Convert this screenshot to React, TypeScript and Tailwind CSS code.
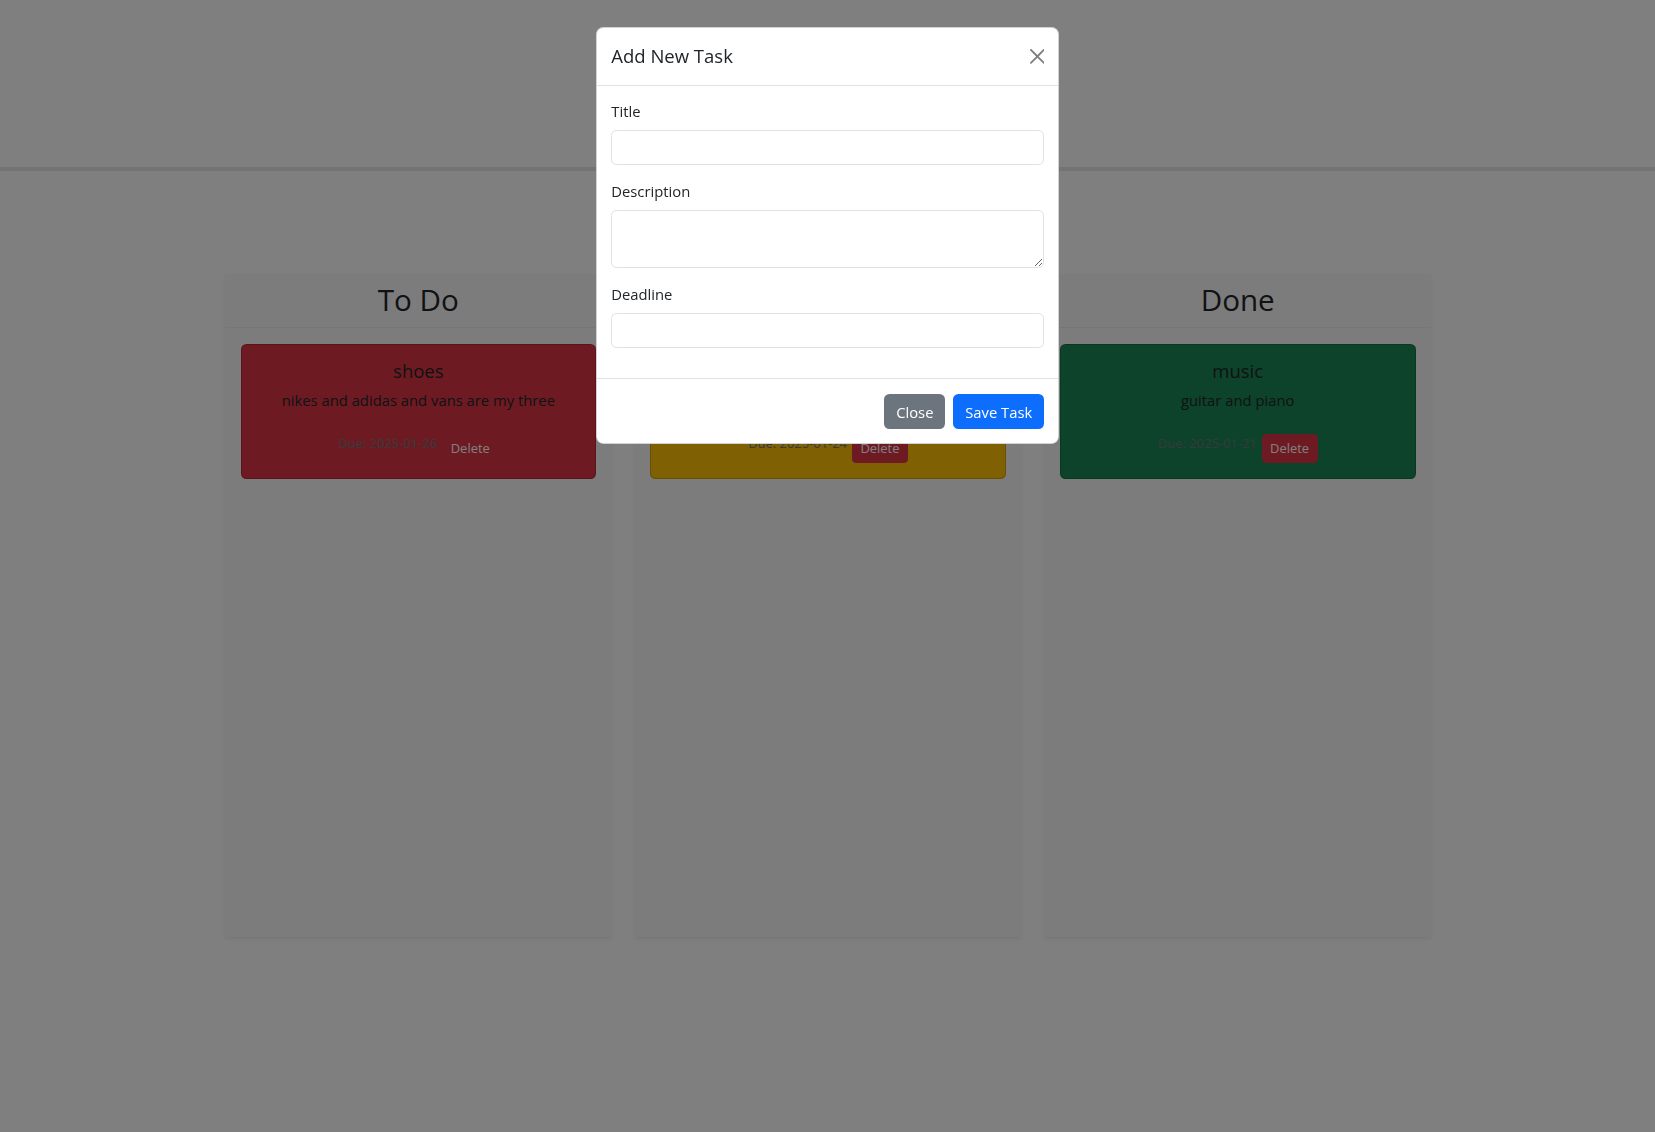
import React from "react";

type Task = {
  title: string;
  desc: string;
  due: string;
  bg: string;
};

const columns: { name: string; tasks: Task[] }[] = [
  {
    name: "To Do",
    tasks: [
      {
        title: "shoes",
        desc: "nikes and adidas and vans are my three",
        due: "2025-01-26",
        bg: "bg-[#dc3545]",
      },
    ],
  },
  {
    name: "In Progress",
    tasks: [
      {
        title: "work",
        desc: "finish the report",
        due: "2025-01-24",
        bg: "bg-[#ffc107]",
      },
    ],
  },
  {
    name: "Done",
    tasks: [
      {
        title: "music",
        desc: "guitar and piano",
        due: "2025-01-21",
        bg: "bg-[#198754]",
      },
    ],
  },
];

function TaskCard({ t }: { t: Task }) {
  return (
    <div
      className={`${t.bg} rounded-[5.5px] border border-black/[.175] p-[14.8px] text-center text-[#212529]`}
    >
      <h5 className="text-[18.5px] leading-[1.2] font-normal mb-[7.4px]">{t.title}</h5>
      <p className="text-[14.8px] leading-[1.5] mb-[22.7px]">{t.desc}</p>
      <div className="flex justify-center items-start gap-[5px]">
        <small className="text-[12.95px] leading-[1.5] text-[#6c757d]">Due: {t.due}</small>
        <button className="h-[28.8px] px-[7.4px] rounded-[3.7px] bg-[#dc3545] border border-[#dc3545] text-white text-[12.95px] leading-[1.5]">
          Delete
        </button>
      </div>
    </div>
  );
}

export default function App() {
  return (
    <div className="relative min-h-screen bg-white font-['Open_Sans','Noto_Sans',sans-serif] text-[#212529]">
      <div className="h-[167px]" />
      <div className="h-[4px] bg-[#e6e6e6]" />
      <div className="mt-[103px] ml-[225px] w-[1206px] flex gap-[23px]">
        {columns.map((c) => (
          <div
            key={c.name}
            className="flex-1 h-[663px] bg-[#f8f9fa] shadow-[0_2px_4px_rgba(0,0,0,0.075)]"
          >
            <div className="h-[54px] pb-[1.5px] flex items-center justify-center border-b border-[#e9ecef]">
              <h2 className="text-[29.6px] leading-[1.2] font-normal">{c.name}</h2>
            </div>
            <div className="px-[15.5px] pt-[16px] flex flex-col gap-[14.8px]">
              {c.tasks.map((t) => (
                <TaskCard key={t.title} t={t} />
              ))}
            </div>
          </div>
        ))}
      </div>

      {/* backdrop */}
      <div className="fixed inset-0 bg-black/50" />

      {/* modal */}
      <div className="fixed inset-0 flex justify-center items-start">
        <div className="mt-[26.7px] w-[462.5px] bg-white rounded-[7.4px] border border-black/[.175]">
          <div className="h-[58px] px-[14px] flex items-center justify-between border-b border-[#dee2e6]">
            <h5 className="text-[18.5px] leading-[1.5] font-normal">Add New Task</h5>
            <svg
              viewBox="0 0 16 16"
              className="w-[14.8px] h-[14.8px] -mr-[0.7px] opacity-50"
              fill="#000"
            >
              <path d="M.293.293a1 1 0 0 1 1.414 0L8 6.586 14.293.293a1 1 0 1 1 1.414 1.414L9.414 8l6.293 6.293a1 1 0 0 1-1.414 1.414L8 9.414l-6.293 6.293a1 1 0 0 1-1.414-1.414L6.586 8 .293 1.707a1 1 0 0 1 0-1.414z" />
            </svg>
          </div>
          <div className="px-[14px] pt-[14.3px] pb-[15px] text-[14.8px] leading-[1.5]">
            <div className="mb-[15px]">
              <label className="block mb-[7.8px]">Title</label>
              <input
                type="text"
                className="block w-full h-[35.5px] border border-[#dee2e6] rounded-[5.5px] px-[11px] outline-none"
              />
            </div>
            <div className="mb-[15px]">
              <label className="block mb-[7.8px]">Description</label>
              <textarea
                rows={2}
                className="block w-full h-[57.5px] border border-[#dee2e6] rounded-[5.5px] px-[11px] py-[5.5px] outline-none"
              />
            </div>
            <div className="mb-[15px]">
              <label className="block mb-[7.8px]">Deadline</label>
              <input
                type="text"
                className="block w-full h-[35.5px] border border-[#dee2e6] rounded-[5.5px] px-[11px] outline-none"
              />
            </div>
          </div>
          <div className="border-t border-[#dee2e6] flex justify-end items-center gap-[7.7px] px-[13.5px] pt-[14.5px] pb-[13.5px]">
            <button className="h-[35.4px] px-[12px] rounded-[5.5px] bg-[#6c757d] text-white text-[14.8px] leading-[1.5]">
              Close
            </button>
            <button className="h-[35.4px] px-[12px] rounded-[5.5px] bg-[#0d6efd] text-white text-[14.8px] leading-[1.5]">
              Save Task
            </button>
          </div>
        </div>
      </div>
    </div>
  );
}
